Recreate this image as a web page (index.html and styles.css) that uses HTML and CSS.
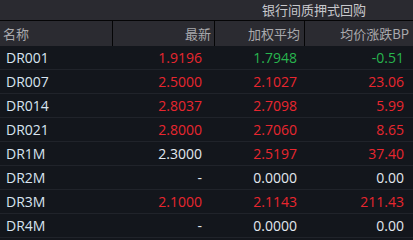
FILE: index.html
```html
<!DOCTYPE html>
<html>
<head>
<meta charset="utf-8">
<link rel="stylesheet" href="styles.css">
</head>
<body>
<div class="panel">
  <div class="topbar">
    <div class="title">银行间质押式回购</div>
  </div>
  <div class="head">
    <div class="hc c1">名称</div>
    <div class="hc c2">最新</div>
    <div class="hc c3">加权平均</div>
    <div class="hc c4">均价涨跌BP</div>
  </div>
  <div class="row">
    <div class="name">DR001</div><div class="v2 red">1.9196</div><div class="v3 green">1.7948</div><div class="v4 green">-0.51</div>
  </div>
  <div class="row">
    <div class="name">DR007</div><div class="v2 red">2.5000</div><div class="v3 red">2.1027</div><div class="v4 red">23.06</div>
  </div>
  <div class="row">
    <div class="name">DR014</div><div class="v2 red">2.8037</div><div class="v3 red">2.7098</div><div class="v4 red">5.99</div>
  </div>
  <div class="row">
    <div class="name">DR021</div><div class="v2 red">2.8000</div><div class="v3 red">2.7060</div><div class="v4 red">8.65</div>
  </div>
  <div class="row">
    <div class="name">DR1M</div><div class="v2 white">2.3000</div><div class="v3 red">2.5197</div><div class="v4 red">37.40</div>
  </div>
  <div class="row">
    <div class="name">DR2M</div><div class="v2 white">-</div><div class="v3 white">0.0000</div><div class="v4 white">0.00</div>
  </div>
  <div class="row">
    <div class="name">DR3M</div><div class="v2 red">2.1000</div><div class="v3 red">2.1143</div><div class="v4 red">211.43</div>
  </div>
  <div class="row">
    <div class="name">DR4M</div><div class="v2 white">-</div><div class="v3 white">0.0000</div><div class="v4 white">0.00</div>
  </div>
</div>
</body>
</html>
```

FILE: styles.css
```css
html, body {
  margin: 0;
  padding: 0;
  background: #13161c;
}
.panel {
  width: 413px;
  height: 240px;
  overflow: hidden;
  background: #13161c;
  font-family: "Open Sans", "Noto Sans CJK SC", sans-serif;
}
.topbar {
  height: 20px;
  background: #2a2a30;
  border-bottom: 1px solid #050506;
  display: grid;
  grid-template-columns: 215px 1fr;
}
.title {
  grid-column: 2;
  text-align: center;
  color: #c8c8cc;
  font-family: "Noto Sans CJK SC", sans-serif;
  font-size: 13px;
  line-height: 20px;
}
.head {
  height: 25px;
  background: #2b2b31;
  display: grid;
  grid-template-columns: 113px 102px 90px 1fr;
  font-family: "Noto Sans CJK SC", sans-serif;
  font-size: 13px;
  color: #a9a9ad;
}
.hc {
  line-height: 25px;
  border-right: 1px solid #050506;
  text-align: right;
  white-space: nowrap;
}
.hc.c1 { text-align: left; padding-left: 3px; }
.hc.c2 { padding-right: 3px; }
.hc.c3 { padding-right: 4px; }
.hc.c4 { padding-right: 4px; border-right: none; }
.row {
  height: 24px;
  box-sizing: border-box;
  border-bottom: 1px solid #20232a;
  display: grid;
  grid-template-columns: 113px 102px 90px 1fr;
  font-size: 14px;
  line-height: 23px;
  text-align: right;
}
.name {
  text-align: left;
  padding-left: 6px;
  color: #d8e4f0;
}
.v2 { padding-right: 13px; }
.v3 { padding-right: 8px; }
.v4 { padding-right: 9px; }
.red { color: #e8262f; }
.green { color: #28b54e; }
.white { color: #e2e8ef; }
```
